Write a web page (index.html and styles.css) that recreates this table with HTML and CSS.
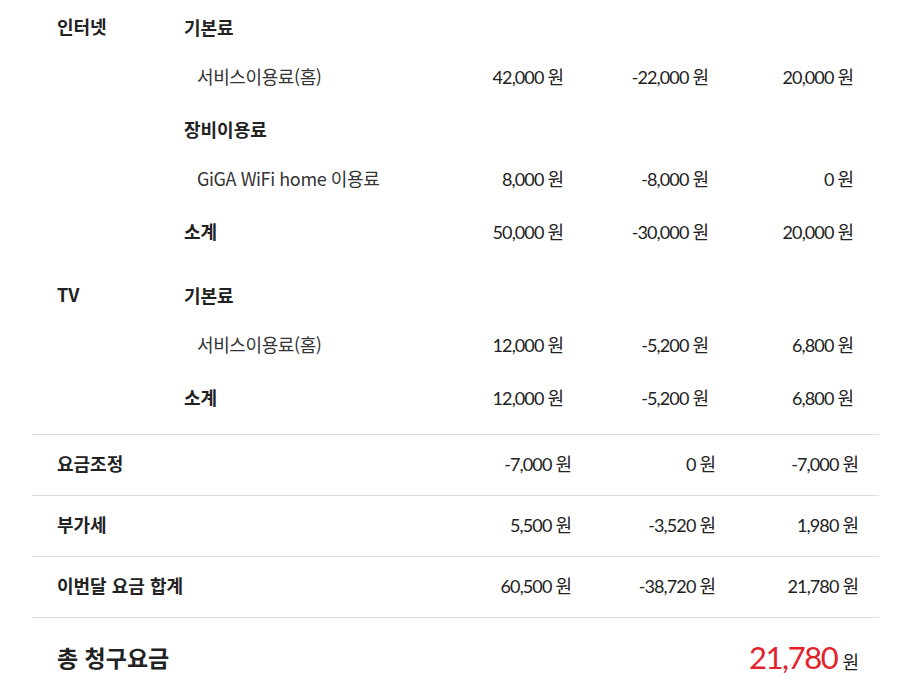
FILE: index.html
```
<!DOCTYPE html>
<html lang="ko">
<head>
    <meta charset="UTF-8">
    <title>요금 상세</title>
    <link rel="stylesheet" href="styles.css">
</head>
<body>
    <div id="bill">
        <div class="group">
            <div class="cat">인터넷</div>
            <div class="rows">
                <div class="row head"><span class="name">기본료</span></div>
                <div class="row item">
                    <span class="name">서비스이용료(홈)</span>
                    <span class="amt">42,000<em>원</em></span>
                    <span class="amt">-22,000<em>원</em></span>
                    <span class="amt">20,000<em>원</em></span>
                </div>
                <div class="row head"><span class="name">장비이용료</span></div>
                <div class="row item">
                    <span class="name">GiGA WiFi home 이용료</span>
                    <span class="amt">8,000<em>원</em></span>
                    <span class="amt">-8,000<em>원</em></span>
                    <span class="amt">0<em>원</em></span>
                </div>
                <div class="row head">
                    <span class="name">소계</span>
                    <span class="amt">50,000<em>원</em></span>
                    <span class="amt">-30,000<em>원</em></span>
                    <span class="amt">20,000<em>원</em></span>
                </div>
            </div>
        </div>
        <div class="group">
            <div class="cat">TV</div>
            <div class="rows">
                <div class="row head"><span class="name">기본료</span></div>
                <div class="row item">
                    <span class="name">서비스이용료(홈)</span>
                    <span class="amt">12,000<em>원</em></span>
                    <span class="amt">-5,200<em>원</em></span>
                    <span class="amt">6,800<em>원</em></span>
                </div>
                <div class="row head">
                    <span class="name">소계</span>
                    <span class="amt">12,000<em>원</em></span>
                    <span class="amt">-5,200<em>원</em></span>
                    <span class="amt">6,800<em>원</em></span>
                </div>
            </div>
        </div>

        <ul id="sum">
            <li>
                <span class="name">요금조정</span>
                <span class="amt">-7,000<em>원</em></span>
                <span class="amt">0<em>원</em></span>
                <span class="amt">-7,000<em>원</em></span>
            </li>
            <li>
                <span class="name">부가세</span>
                <span class="amt">5,500<em>원</em></span>
                <span class="amt">-3,520<em>원</em></span>
                <span class="amt">1,980<em>원</em></span>
            </li>
            <li>
                <span class="name">이번달 요금 합계</span>
                <span class="amt">60,500<em>원</em></span>
                <span class="amt">-38,720<em>원</em></span>
                <span class="amt">21,780<em>원</em></span>
            </li>
        </ul>

        <div id="total">
            <span class="name">총 청구요금</span>
            <span class="amt">21,780<em>원</em></span>
        </div>
    </div>
</body>
</html>
```
FILE: styles.css
```
*{
    margin: 0;
    padding: 0;
    list-style: none;
}
body{
    background: #fff;
    color: #222;
    font-family: "Noto Sans CJK KR", "Noto Sans", sans-serif;
    font-size: 18px;
}
#bill{
    width: 847px;
    margin-left: 32px;
    padding-top: 3px;
}
.group{
    display: grid;
    grid-template-columns: 127px 1fr;
    padding-left: 25px;
    padding-right: 25px;
}
.group + .group{
    margin-top: 13px;
}
.cat{
    font-weight: bold;
    height: 51px;
    line-height: 47px;
}
.row{
    display: grid;
    grid-template-columns: 1fr 145px 145px 145px;
    align-items: center;
    height: 51px;
    padding-bottom: 4px;
    box-sizing: border-box;
}
.row .name{
    font-weight: bold;
}
.row.item{
    padding-bottom: 8px;
}
.row.item .name{
    font-weight: normal;
    color: #333;
    padding-left: 13px;
    letter-spacing: -0.4px;
}
.amt{
    text-align: right;
    font-family: Lato, "Noto Sans CJK KR", sans-serif;
    letter-spacing: -0.9px;
}
.amt em{
    font-style: normal;
    font-family: "Noto Sans CJK KR", sans-serif;
    margin-left: 4px;
    letter-spacing: 0;
}
#sum{
    margin-top: 10px;
    border-top: 1px solid #ddd;
}
#sum li{
    display: grid;
    grid-template-columns: 1fr 144px 144px 143px;
    align-items: center;
    height: 61px;
    padding: 0 20px 5px 25px;
    box-sizing: border-box;
    border-bottom: 1px solid #ddd;
}
#sum .name{
    font-weight: bold;
}
#total{
    display: flex;
    justify-content: space-between;
    align-items: center;
    height: 82px;
    padding: 0 20px 5px 25px;
    box-sizing: border-box;
}
#total .name{
    font-size: 23px;
    font-weight: bold;
}
#total .amt{
    font-size: 31px;
    color: #e3232c;
    letter-spacing: -1.4px;
}
#total .amt em{
    font-size: 18px;
    color: #222;
    margin-left: 5px;
}
```
